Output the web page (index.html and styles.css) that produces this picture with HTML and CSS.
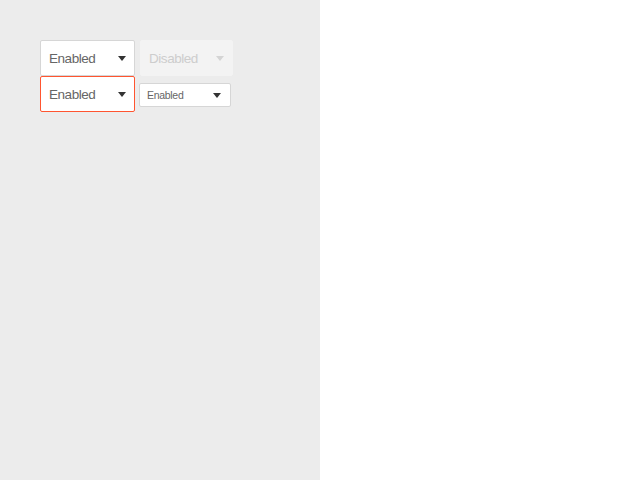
FILE: index.html
```html
<!DOCTYPE html>
<html>
<head>
<meta charset="utf-8">
<link rel="stylesheet" href="styles.css">
</head>
<body>
<div class="pane">
  <div class="grid">
    <div class="row">
      <div class="select"><span class="label">Enabled</span><span class="caret"></span></div>
      <div class="select disabled"><span class="label">Disabled</span><span class="caret"></span></div>
    </div>
    <div class="row">
      <div class="select error"><span class="label">Enabled</span><span class="caret"></span></div>
      <div class="select small"><span class="label">Enabled</span><span class="caret"></span></div>
    </div>
  </div>
</div>
<div class="blank"></div>
</body>
</html>
```
FILE: styles.css
```css
html, body { margin: 0; padding: 0; height: 100%; }
body { display: flex; font-family: "Liberation Sans", Arial, sans-serif; }
.pane { width: 320px; background: #ececec; padding: 40px; box-sizing: border-box; }
.blank { flex: 1; background: #fff; }
.grid { display: flex; flex-direction: column; gap: 0; }
.row { display: flex; align-items: center; gap: 5px; }
.select {
  box-sizing: border-box;
  width: 95px; height: 36px;
  background: #fff;
  border: 1px solid #d6d6d6;
  border-radius: 2px;
  display: flex; align-items: center; justify-content: space-between;
  padding: 0 8px 0 8px;
  color: #666;
  font-size: 13.5px;
  letter-spacing: -0.45px;
}
.caret {
  width: 0; height: 0;
  border-left: 4.5px solid transparent;
  border-right: 4.5px solid transparent;
  border-top: 5px solid #333;
}
.disabled { background: #f3f3f3; border-color: #f3f3f3; color: #cdcdcd; width: 93px; }
.disabled .caret { border-top-color: #d4d4d4; }
.error { border-color: #ff5530; }
.row + .row { gap: 4px; }
.small { width: 92px; height: 24px; margin-top: 2px; font-size: 10.5px; letter-spacing: -0.3px; padding: 0 9px 0 7px; }
```
